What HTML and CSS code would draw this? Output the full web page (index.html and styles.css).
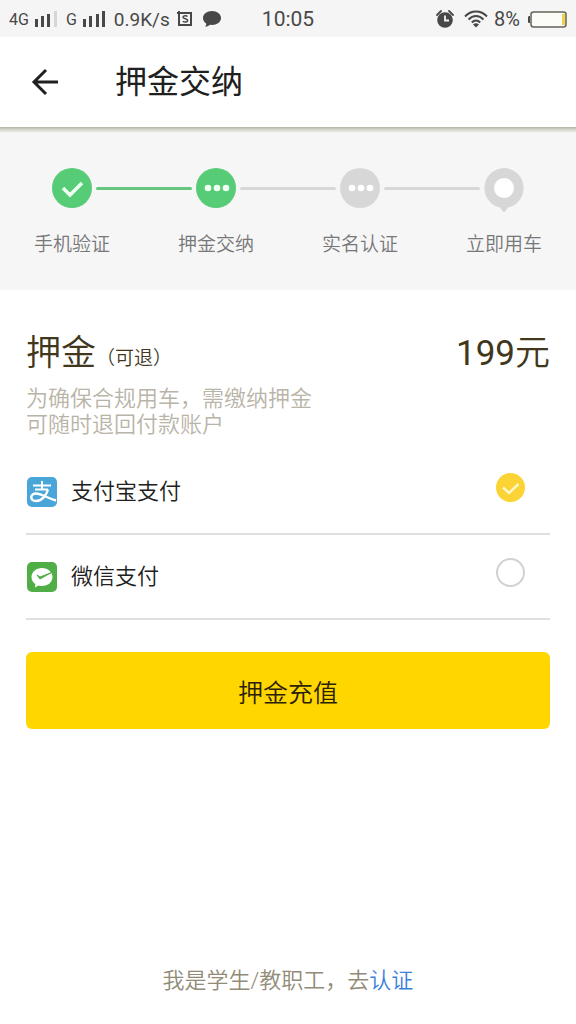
FILE: index.html
```html
<!DOCTYPE html>
<html lang="zh-CN">
<head>
<meta charset="utf-8">
<meta name="viewport" content="width=device-width, initial-scale=1">
<title>押金交纳</title>
<link rel="stylesheet" href="styles.css">
</head>
<body>
<div class="status">
  <div class="status-left">
    <span class="net">4G</span>
    <svg class="signal" width="23" height="18" viewBox="0 0 23 18"><path fill="#484848" d="M0 9h3v8H0zM6 6h3v11H6zM12 4h3v13h-3z"/><path fill="#d6d6d6" d="M19 1h3v16h-3z"/></svg>
    <span class="net">G</span>
    <svg class="signal" width="23" height="18" viewBox="0 0 23 18"><path fill="#484848" d="M0 9h3v8H0zM6 6h3v11H6zM13 4h3v13h-3zM19 1h3v16h-3z"/></svg>
    <span class="speed">0.9K/s</span>
    <svg class="app-mark" width="16" height="16" viewBox="0 0 16 16" fill="none" stroke="#484848"><path stroke-width="2" d="M0 2h14v12H2V0M14 1v14"/><path stroke-width="1.500" d="M10.500 5.500C9.500 4.400 6 4.600 6 6.300c0 1.800 4.700 1.200 4.700 3.200 0 1.800-3.500 2-4.900.8"/></svg>
    <svg width="18" height="16" viewBox="0 0 18 16"><path fill="#484848" d="M9 0c5 0 9 3 9 7s-4 7-9 7l-2-.2C5.500 15 4 15.700 2 15.800c1-.9 1.300-2 1.200-3.300C1.200 11.200 0 9.300 0 7c0-4 4-7 9-7z"/></svg>
  </div>
  <time class="clock">10:05</time>
  <div class="status-right">
    <svg class="alarm" width="18" height="18" viewBox="0 0 18 18"><circle cx="9" cy="10" r="7.800" fill="#484848"/><path d="M1 5L5 1M17 5l-4-4" stroke="#484848" stroke-width="1.800" stroke-linecap="round"/><path d="M9 5.500V10.500h4" fill="none" stroke="#f5f5f5" stroke-width="1.800"/></svg>
    <svg class="wifi" width="24" height="18" viewBox="0 0 24 18" fill="none" stroke="#484848" stroke-width="2"><path d="M1 6.500C7-.2 17-.2 23 6.500M4.500 9.500c4.500-4.700 10.500-4.700 15 0M7.800 12.500c2.500-2.600 5.900-2.600 8.400 0"/><path fill="#484848" stroke="none" d="M9 14.500q3-2.300 6 0l-3 3z"/></svg>
    <span class="percent">8%</span>
    <svg width="39" height="17" viewBox="0 0 39 17"><path fill="#484848" d="M2 5v7H1Q0 12 0 10.500v-4Q0 5 1 5z"/><rect x="3" y="1" width="35" height="15" rx="2.500" fill="#fbfbf7" stroke="#66645a" stroke-width="1.500"/><path fill="#e8d44c" d="M34 3h3v11h-3z"/></svg>
  </div>
</div>

<header class="header">
  <button class="back" type="button" aria-label="返回">
    <svg width="28" height="28" viewBox="0 0 28 28" fill="none" stroke="#202020" stroke-width="3"><path d="M27 14H3M15 2L3 14l12 12"/></svg>
  </button>
  <h1 class="title">押金交纳</h1>
</header>

<ol class="steps">
  <li class="step">
    <div class="track"><i class="line left none"></i>
      <svg class="marker" width="40" height="44" viewBox="0 0 40 44"><circle cx="20" cy="20" r="20" fill="#56cc76"/><path d="M11 20l7 7 12-12" fill="none" stroke="#effff1" stroke-width="3.500"/></svg>
      <i class="line right done"></i></div>
    <span class="step-label">手机验证</span>
  </li>
  <li class="step" aria-current="step">
    <div class="track"><i class="line left done"></i>
      <svg class="marker" width="40" height="44" viewBox="0 0 40 44"><circle cx="20" cy="20" r="20" fill="#56cc76"/><g fill="#effff1"><circle cx="12" cy="20" r="3.300"/><circle cx="21" cy="20" r="3.300"/><circle cx="30" cy="20" r="3.300"/></g></svg>
      <i class="line right"></i></div>
    <span class="step-label">押金交纳</span>
  </li>
  <li class="step">
    <div class="track"><i class="line left"></i>
      <svg class="marker" width="40" height="44" viewBox="0 0 40 44"><circle cx="20" cy="20" r="20" fill="#d7d7d7"/><g fill="#fff"><circle cx="12" cy="20" r="3.300"/><circle cx="21" cy="20" r="3.300"/><circle cx="30" cy="20" r="3.300"/></g></svg>
      <i class="line right"></i></div>
    <span class="step-label">实名认证</span>
  </li>
  <li class="step">
    <div class="track"><i class="line left"></i>
      <svg class="marker" width="40" height="44" viewBox="0 0 40 44"><path d="M20 0a20 20 0 0 1 4 39.500L20 45l-4-5.500A20 20 0 0 1 20 0z" fill="#d7d7d7"/><circle cx="20" cy="20" r="10" fill="#fff"/></svg>
      <i class="line right none"></i></div>
    <span class="step-label">立即用车</span>
  </li>
</ol>

<main class="content">
  <div class="deposit">
    <h2 class="deposit-name">押金<small class="refundable">（可退）</small></h2>
    <strong class="amount">199<span class="unit">元</span></strong>
  </div>
  <p class="note">为确保合规用车，需缴纳押金<br>可随时退回付款账户</p>

  <form class="pay">
    <label class="method">
      <svg class="logo" width="30" height="30" viewBox="0 0 30 30"><rect width="30" height="30" rx="5" fill="#4aa6d8"/><g fill="none" stroke="#fff"><path stroke-width="2" d="M6 8.500h18M15 4v8.500M8 12.500h13"/><path stroke-width="2.400" d="M21 12.500C19.500 18 15 24 9 24c-6.500 0-6-7.500 0-7.500 5 0 11 4.500 20 7"/></g></svg>
      <span class="method-name">支付宝支付</span>
      <span class="choice"><input class="radio" type="radio" name="method" value="alipay" checked>
        <svg class="tick" width="29" height="29" viewBox="0 0 29 29" fill="none" stroke="#fff6c8" stroke-width="2.500"><path d="M7 14.500l6 5.500 9.500-9"/></svg></span>
    </label>
    <label class="method">
      <svg class="logo" width="30" height="30" viewBox="0 0 30 30"><rect width="30" height="30" rx="5" fill="#50ae47"/><path fill="#fff" d="M15 6c6 0 10.500 4 10.500 9S21 24 15 24q-2 0-3.500-.5L8 25.500l.3-3.500C6 20.500 4.500 18 4.500 15 4.500 10 9 6 15 6z"/><path d="M10 13l3 4 11.500-6.500L13 15z" fill="#50ae47" stroke="#50ae47" stroke-width="1"/></svg>
      <span class="method-name">微信支付</span>
      <span class="choice"><input class="radio" type="radio" name="method" value="wechat">
        <svg class="tick" width="29" height="29" viewBox="0 0 29 29" fill="none" stroke="#fff6c8" stroke-width="2.500"><path d="M7 14.500l6 5.500 9.500-9"/></svg></span>
    </label>
    <button class="submit" type="button">押金充值</button>
  </form>
</main>

<footer class="footer">我是学生/教职工，去<a class="verify" href="#verify">认证</a></footer>
</body>
</html>
```
FILE: styles.css
```css
* { box-sizing: border-box; }

body {
  margin: 0;
  min-height: 100vh;
  display: flex;
  flex-direction: column;
  background: #fff;
  color: #202020;
  font-family: Roboto, "Noto Sans CJK SC", sans-serif;
  font-weight: 350;
}

h1, h2, p, ol { margin: 0; padding: 0; font-weight: inherit; }
button { border: 0; padding: 0; background: none; color: inherit; font: inherit; cursor: pointer; }
svg { display: block; flex: none; }

.status {
  height: 37px;
  padding: 1px 9px 0;
  display: grid;
  grid-template-columns: 1fr auto 1fr;
  align-items: center;
  background: #f5f5f5;
  color: #484848;
  font-weight: 400;
}
.status-left, .status-right { display: flex; align-items: center; white-space: nowrap; }
.status-right { justify-content: flex-end; }
.net { font-size: 16px; }
.signal { margin: 0 8px 0 6px; }
.speed { font-size: 19px; }
.app-mark { margin: 0 10px 0 7px; }
.clock { font-size: 21px; }
.wifi { margin: 0 6px 0 10px; }
.percent { margin-right: 8px; font-size: 20px; }

.header {
  height: 90px;
  padding: 0 31px;
  display: flex;
  align-items: center;
  gap: 56px;
}
.title { font-size: 32px; line-height: 40px; font-weight: 400; }

.steps {
  padding: 41px 0 31px;
  display: grid;
  grid-template-columns: repeat(4, 1fr);
  list-style: none;
  background: linear-gradient(#b4b6a6, #d8d9ce 3px, #f6f6f6 6px);
}
.step { display: flex; flex-direction: column; gap: 19px; }
.track { display: flex; align-items: flex-start; }
.line { flex: 1; height: 3px; margin-top: 19px; background: #d8d8d8; }
.line.left { margin-right: 4px; border-radius: 0 2px 2px 0; }
.line.right { margin-left: 4px; border-radius: 2px 0 0 2px; }
.line.done { background: #67c582; }
.line.none { background: none; }
.step-label { color: #777; font-size: 19px; line-height: 28px; text-align: center; }

.content { padding: 38px 26px 0; }
.deposit { display: flex; justify-content: space-between; align-items: baseline; color: #40371c; line-height: 52px; }
.deposit-name { font-size: 35px; }
.refundable { font-size: 19px; }
.amount { font-size: 35px; font-weight: 400; }
.unit { font-weight: 350; }
.note { margin-top: 1px; color: #b9b4a8; font-size: 22px; line-height: 26px; }

.pay { margin-top: 12px; }
.method {
  height: 85px;
  padding: 0 25px 0 1px;
  display: flex;
  align-items: center;
  border-bottom: 2px solid #dfdfdf;
  cursor: pointer;
}
.method-name { flex: 1; margin-left: 14px; font-size: 22px; line-height: 32px; }
.choice { display: grid; margin-bottom: 8px; }
.radio, .tick { grid-area: 1 / 1; }
.radio {
  appearance: none;
  width: 29px;
  height: 29px;
  margin: 0;
  border: 2px solid #d2d2d2;
  border-radius: 50%;
}
.radio:checked { border: 0; background: #fbd334; }
.tick { visibility: hidden; pointer-events: none; }
.radio:checked + .tick { visibility: visible; }

.submit {
  display: block;
  width: 100%;
  height: 77px;
  margin-top: 32px;
  border-radius: 6px;
  background: #ffd600;
  color: #2b2106;
  font-size: 25px;
}

.footer { margin-top: auto; padding-bottom: 27px; color: #918b78; font-size: 22px; line-height: 32px; text-align: center; }
.verify { color: #3b7fdc; text-decoration: none; }
```
